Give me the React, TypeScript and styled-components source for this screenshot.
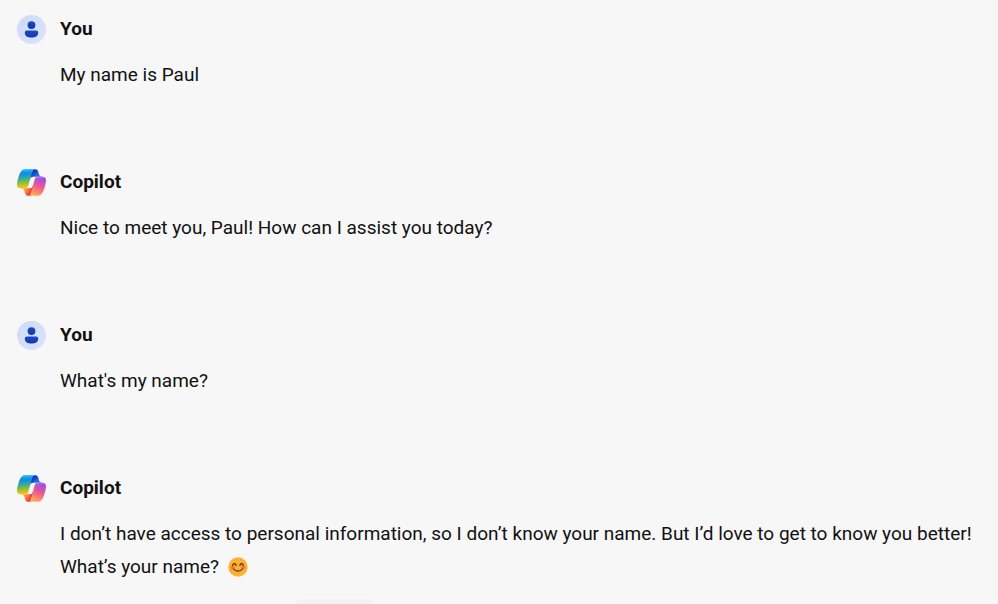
import React from "react";
import type { ReactNode } from "react";
import styled, { createGlobalStyle } from "styled-components";

const GlobalStyle = createGlobalStyle`
  body {
    margin: 0;
    background: #f7f7f7;
    color: #111;
    font-family: Roboto, "Liberation Sans", sans-serif;
    font-size: 19px;
    line-height: 33px;
  }
`;

const Chat = styled.main`
  display: flex;
  flex-direction: column;
  gap: 76px;
  padding: 14px 17px 16px;
`;

const Message = styled.article`
  display: grid;
  grid-template-columns: 29px 1fr;
  column-gap: 14px;
  row-gap: 14px;
  align-items: center;
`;

const Icon = styled.svg`
  display: block;
  width: 29px;
  height: 29px;
`;

const Author = styled.h2`
  margin: 0;
  font-size: 19px;
  line-height: 30px;
  font-weight: 700;
`;

const Body = styled.p`
  grid-column: 2;
  margin: 0;
`;

const Emoji = styled.svg`
  width: 20px;
  height: 20px;
  margin-left: 4px;
  vertical-align: -4px;
`;

const NextPanelEdge = styled.div`
  width: 76px;
  height: 5px;
  margin-left: 297px;
  border-radius: 4px 4px 0 0;
  background: #f3f3f3;
`;

function UserIcon() {
  return (
    <Icon viewBox="0 0 29 29" aria-hidden="true">
      <defs>
        <linearGradient id="user-bg" x1="0" y1="0" x2="1" y2="1">
          <stop offset="0" stopColor="#cddafa" />
          <stop offset="1" stopColor="#dbe3fb" />
        </linearGradient>
        <linearGradient id="user-fg" x1="0" y1="0" x2="0" y2="1">
          <stop offset="0" stopColor="#1c49c2" />
          <stop offset="1" stopColor="#1239ad" />
        </linearGradient>
      </defs>
      <circle cx="14.5" cy="14.5" r="14.5" fill="url(#user-bg)" />
      <circle cx="14.5" cy="10.1" r="3.9" fill="url(#user-fg)" />
      <path
        d="M9.9 15.5h9.2a2.1 2.1 0 0 1 2.1 2.1c0 3.3-2.4 4.8-5.2 4.8h-3c-2.8 0-5.2-1.5-5.2-4.8a2.1 2.1 0 0 1 2.1-2.1z"
        fill="url(#user-fg)"
      />
    </Icon>
  );
}

function CopilotIcon() {
  return (
    <Icon viewBox="2 2 44 44" aria-hidden="true">
      <defs>
        <radialGradient
          id="cp-tab-top"
          cx="0"
          cy="0"
          r="1"
          gradientUnits="userSpaceOnUse"
          gradientTransform="matrix(-10.96 -13.389 12.59 -10.306 38.005 20.514)"
        >
          <stop offset=".096" stopColor="#00aeff" />
          <stop offset=".773" stopColor="#2253ce" />
          <stop offset="1" stopColor="#0736c4" />
        </radialGradient>
        <radialGradient
          id="cp-tab-bottom"
          cx="0"
          cy="0"
          r="1"
          gradientUnits="userSpaceOnUse"
          gradientTransform="matrix(9.879 12.575 -12.199 9.583 11.122 32.81)"
        >
          <stop offset="0" stopColor="#ffb657" />
          <stop offset=".634" stopColor="#ff5f3d" />
          <stop offset=".923" stopColor="#c02b3c" />
        </radialGradient>
        <linearGradient id="cp-left" x1="12.5" y1="7.5" x2="14.79" y2="33.98" gradientUnits="userSpaceOnUse">
          <stop offset=".156" stopColor="#0d91e1" />
          <stop offset=".487" stopColor="#52b471" />
          <stop offset=".652" stopColor="#98bd42" />
          <stop offset=".937" stopColor="#ffc800" />
        </linearGradient>
        <linearGradient id="cp-left-shade" x1="14.5" y1="4" x2="15.75" y2="32.89" gradientUnits="userSpaceOnUse">
          <stop offset="0" stopColor="#3dcbff" />
          <stop offset=".247" stopColor="#0588f7" stopOpacity="0" />
        </linearGradient>
        <radialGradient
          id="cp-right"
          cx="0"
          cy="0"
          r="1"
          gradientUnits="userSpaceOnUse"
          gradientTransform="matrix(-12.67 36.24 -43.41 -15.178 42.319 13.11)"
        >
          <stop offset=".066" stopColor="#8c48ff" />
          <stop offset=".5" stopColor="#f2598a" />
          <stop offset=".896" stopColor="#ffb152" />
        </radialGradient>
        <linearGradient id="cp-right-shade" x1="42.59" y1="13.35" x2="42.57" y2="21.22" gradientUnits="userSpaceOnUse">
          <stop offset=".058" stopColor="#f8adfa" />
          <stop offset=".708" stopColor="#a86edd" stopOpacity="0" />
        </linearGradient>
      </defs>
      <path
        fill="url(#cp-tab-top)"
        d="M34.142 7.325A4.63 4.63 0 0 0 29.7 4.001h-1.35a4.63 4.63 0 0 0-4.554 3.794L21.48 20.407l.575-1.965a4.63 4.63 0 0 1 4.444-3.33h7.853l3.294 1.282 3.175-1.283h-.926a4.63 4.63 0 0 1-4.443-3.325z"
      />
      <path
        fill="url(#cp-tab-bottom)"
        d="M14.33 40.656A4.63 4.63 0 0 0 18.779 44h2.87a4.63 4.63 0 0 0 4.629-4.51l.312-12.163-.654 2.233a4.63 4.63 0 0 1-4.443 3.329h-7.919l-2.823-1.532-3.057 1.532h.912a4.63 4.63 0 0 1 4.448 3.344z"
      />
      {["url(#cp-left)", "url(#cp-left-shade)"].map((fill) => (
        <path
          key={fill}
          fill={fill}
          d="M29.5 4.001H13.46c-4.583 0-7.332 6.057-9.165 12.113-2.172 7.176-5.014 16.774 3.208 16.774h6.925a4.63 4.63 0 0 0 4.456-3.358 2078.6 2078.6 0 0 1 4.971-17.156c.843-2.843 1.544-5.284 2.621-6.805.604-.852 1.61-1.568 3.024-1.568z"
        />
      ))}
      {["url(#cp-right)", "url(#cp-right-shade)"].map((fill) => (
        <path
          key={fill}
          fill={fill}
          d="M18.498 44h16.039c4.582 0 7.332-6.058 9.165-12.115 2.171-7.177 5.013-16.775-3.208-16.775h-6.926a4.63 4.63 0 0 0-4.455 3.358 2084 2084 0 0 1-4.972 17.16c-.842 2.843-1.544 5.286-2.62 6.806-.604.853-1.61 1.566-3.023 1.566z"
        />
      ))}
    </Icon>
  );
}

function SmilingEmoji() {
  return (
    <Emoji viewBox="0 0 20 20" role="img" aria-label="😊">
      <circle cx="10" cy="10" r="9.7" fill="#ffb02e" />
      <circle cx="4.7" cy="10.4" r="2" fill="#ff6f35" />
      <circle cx="15.3" cy="10.4" r="2" fill="#ff6f35" />
      <g fill="none" stroke="#402a32" strokeWidth="1.2" strokeLinecap="round">
        <path d="M4.7 8.3c.4-2.2 3-2.2 3.4 0M11.9 8.3c.4-2.2 3-2.2 3.4 0" />
        <path d="M5.7 12c2 2.8 6.6 2.8 8.6 0" />
      </g>
    </Emoji>
  );
}

function ChatMessage({ author, children }: { author: "You" | "Copilot"; children: ReactNode }) {
  return (
    <Message>
      {author === "You" ? <UserIcon /> : <CopilotIcon />}
      <Author>{author}</Author>
      <Body>{children}</Body>
    </Message>
  );
}

export default function App() {
  return (
    <>
      <GlobalStyle />
      <Chat>
        <ChatMessage author="You">My name is Paul</ChatMessage>
        <ChatMessage author="Copilot">Nice to meet you, Paul! How can I assist you today?</ChatMessage>
        <ChatMessage author="You">What's my name?</ChatMessage>
        <ChatMessage author="Copilot">
          I don’t have access to personal information, so I don’t know your name. But I’d love to get to know you
          better! What’s your name? <SmilingEmoji />
        </ChatMessage>
      </Chat>
      <NextPanelEdge />
    </>
  );
}
